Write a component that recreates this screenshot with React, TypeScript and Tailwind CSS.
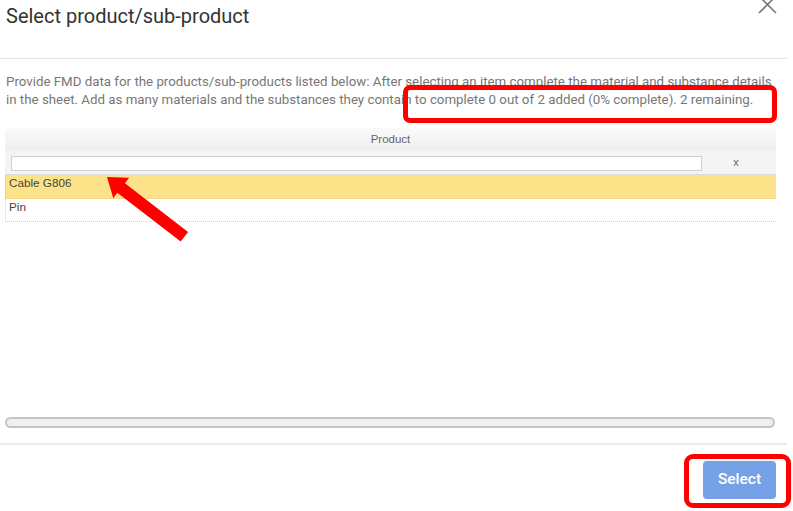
import React from "react";

export default function App() {
  return (
    <div className="relative h-[511px] w-[793px] overflow-hidden bg-white">
      <div className="flex h-[511px] w-[787px] flex-col">
        {/* Header */}
        <div className="relative h-[59px] shrink-0 border-b border-[#e5e5e5]">
          <div className="pl-[6px] pt-[3px] font-['Roboto',sans-serif] text-[20px] leading-[26px] text-[#333]">
            Select product/sub-product
          </div>
          <svg
            className="absolute right-[9px] top-[-6px]"
            width="21"
            height="21"
            viewBox="0 0 21 21"
          >
            <path d="M2 2 L19 19 M19 2 L2 19" stroke="#777" strokeWidth="1.6" fill="none" />
          </svg>
        </div>

        {/* Body */}
        <div className="flex flex-1 flex-col">
          <p className="pl-[6px] pr-[8px] pt-[14px] font-['Roboto',sans-serif] text-[13.3px] leading-[18px] text-[#777]">
            Provide FMD data for the products/sub-products listed below: After selecting an item complete the material and substance details in the sheet. Add as many materials and the substances they contain to complete 0 out of 2 added (0% complete). 2 remaining.
          </p>

          <div className="ml-[5px] mt-[19px] w-[771px] font-['Liberation_Sans',Arial,sans-serif]">
            <div className="flex h-[23px] items-center justify-center rounded-t-[4px] bg-gradient-to-b from-[#fafafa] to-[#efefef] text-[11.5px] text-[#666]">
              Product
            </div>
            <div className="flex h-[24px] items-center border-b border-[#dcdcdc] bg-[#f4f4f4]">
              <div className="ml-[6px] mt-[1px] h-[15px] w-[691px] border border-[#cfcfcf] bg-white" />
              <div className="flex-1 pr-[6px] text-center text-[11px] text-[#666]">x</div>
            </div>
            <div className="h-[24px] border-b border-l border-dotted border-[#cfcfcf] bg-[#fce38a] pl-[3px] pt-[1px] text-[11.7px] leading-[14px] text-[#444]">
              Cable G806
            </div>
            <div className="h-[23px] border-b border-l border-dotted border-[#cfcfcf] pl-[3px] pt-[1px] text-[11.7px] leading-[14px] text-[#444]">
              Pin
            </div>
          </div>

          <div className="flex-1" />

          <div className="mb-[15px] ml-[5px] h-[11px] w-[770px] rounded-full border-2 border-[#c4c4c4] bg-[#efefef]" />
        </div>

        {/* Footer */}
        <div className="flex h-[68px] shrink-0 justify-end border-t-2 border-[#e8eaee] pr-[11px] pt-[16px]">
          <button className="h-[38px] w-[73px] rounded-[4px] bg-[#77a1e6] font-['Roboto',sans-serif] text-[15.5px] font-medium text-white">
            Select
          </button>
        </div>
      </div>

      {/* Annotations */}
      <div className="absolute left-[403px] top-[85px] h-[38px] w-[374px] rounded-[7px] border-[5px] border-[#ff0000]" />
      <div className="absolute left-[684px] top-[454px] h-[54px] w-[107px] rounded-[9px] border-[5px] border-[#ff0000]" />
      <svg className="pointer-events-none absolute left-0 top-0" width="793" height="511">
        <polygon
          points="107,177 129.1,177.7 124.9,183.3 188.1,232.1 180.7,241.5 117.3,192.7 113.3,198.3"
          fill="#ff0000"
        />
      </svg>
    </div>
  );
}
